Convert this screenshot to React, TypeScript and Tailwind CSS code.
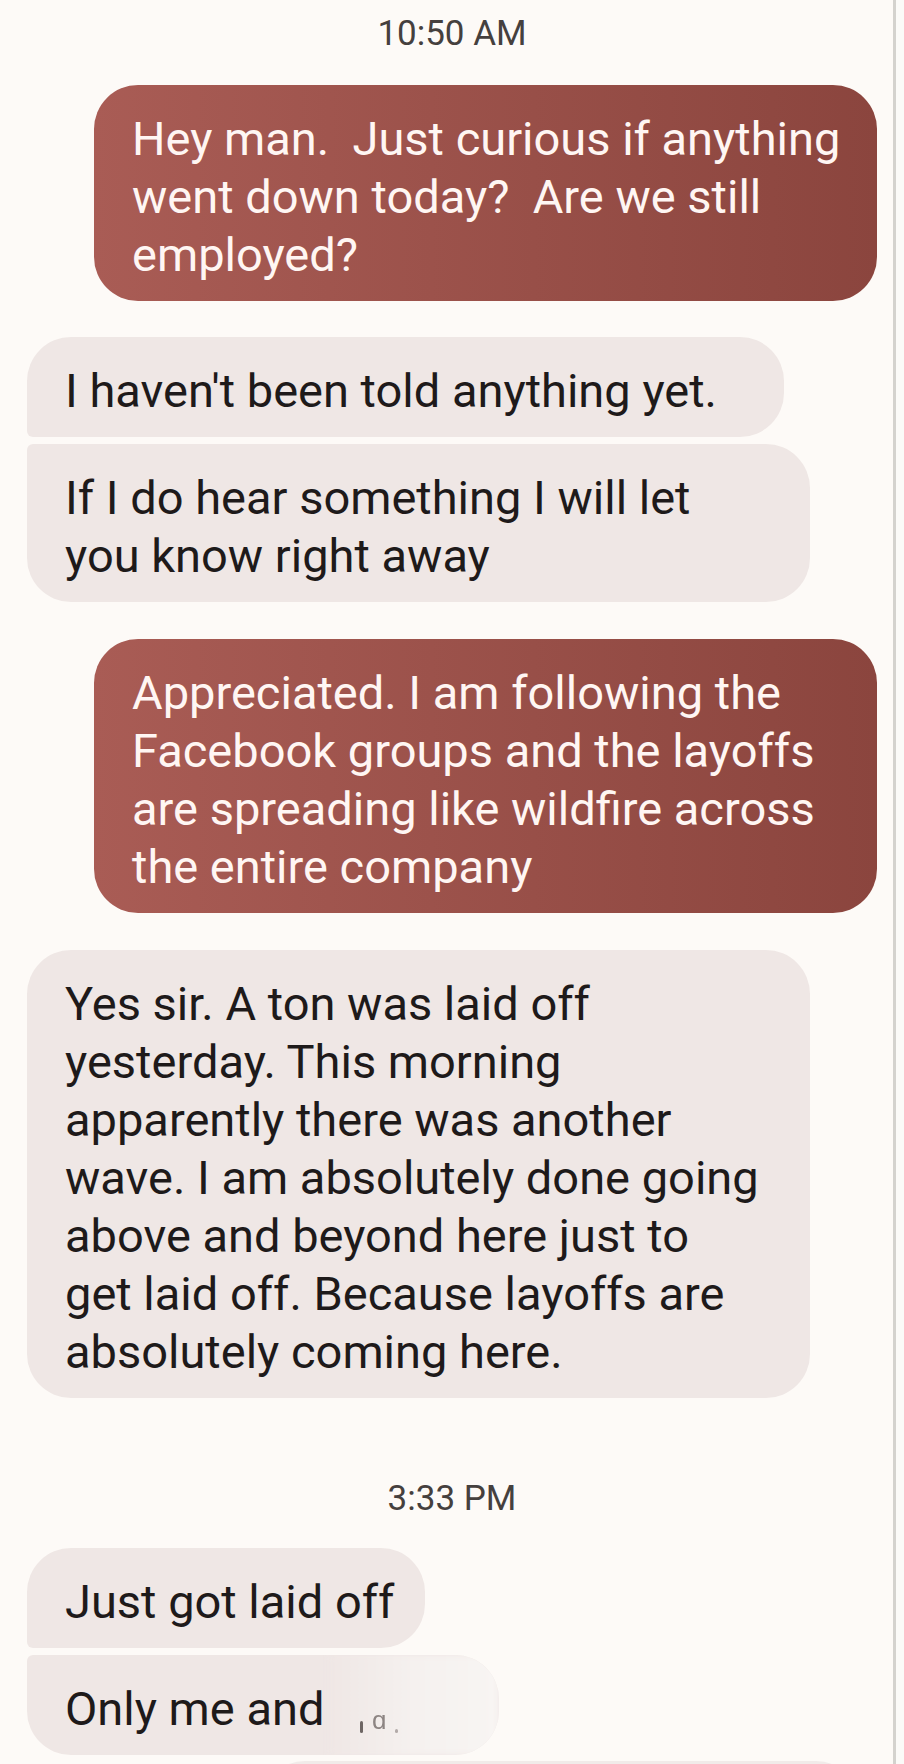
import React from "react";

type Msg = {
  lines: string[];
  width: string;
  corners: string;
};

const sent: Record<string, Msg> = {
  first: {
    lines: [
      "Hey man.  Just curious if anything",
      "went down today?  Are we still",
      "employed?",
    ],
    width: "w-[783px]",
    corners: "rounded-[44px]",
  },
  second: {
    lines: [
      "Appreciated. I am following the",
      "Facebook groups and the layoffs",
      "are spreading like wildfire across",
      "the entire company",
    ],
    width: "w-[783px]",
    corners: "rounded-[44px]",
  },
};

function Stamp({ time, className }: { time: string; className?: string }) {
  return (
    <div
      className={
        "shrink-0 text-center text-[35px] leading-[40px] text-[#45403e] " +
        (className ?? "")
      }
    >
      {time}
    </div>
  );
}

function Sent({ msg, className }: { msg: Msg; className?: string }) {
  return (
    <div
      className={
        "shrink-0 self-end px-[38px] pt-[25px] pb-[17px] text-[47px] leading-[58px] text-[#fff6f3] whitespace-pre bg-gradient-to-r from-[#a95c55] to-[#8b453e] " +
        msg.width +
        " " +
        msg.corners +
        " " +
        (className ?? "")
      }
    >
      {msg.lines.map((l, i) => (
        <div key={i}>{l}</div>
      ))}
    </div>
  );
}

function Received({
  lines,
  width,
  corners,
  className,
  children,
}: {
  lines: string[];
  width: string;
  corners: string;
  className?: string;
  children?: React.ReactNode;
}) {
  return (
    <div
      className={
        "relative shrink-0 self-start overflow-hidden bg-[#efe7e5] px-[38px] pt-[25px] pb-[17px] text-[47px] leading-[58px] text-[#1e1a1a] whitespace-pre " +
        width +
        " " +
        corners +
        " " +
        (className ?? "")
      }
    >
      {lines.map((l, i) => (
        <div key={i}>{l}</div>
      ))}
      {children}
    </div>
  );
}

export default function App() {
  return (
    <div className="flex h-[1764px] w-[904px] overflow-hidden bg-[#fbfaf8] font-[family-name:Roboto,sans-serif]">
      <div className="flex w-[893px] shrink-0 flex-col bg-[#fdfaf7] pl-[27px] pr-[16px] pt-[14px]">
        <Stamp time="10:50 AM" />

        <Sent msg={sent.first} className="mt-[31px]" />

        <Received
          className="mt-[36px]"
          width="w-[757px]"
          corners="rounded-[44px] rounded-bl-[6px]"
          lines={["I haven't been told anything yet."]}
        />
        <Received
          className="mt-[7px]"
          width="w-[783px]"
          corners="rounded-[44px] rounded-tl-[6px]"
          lines={["If I do hear something I will let", "you know right away"]}
        />

        <Sent msg={sent.second} className="mt-[37px]" />

        <Received
          className="mt-[37px]"
          width="w-[783px]"
          corners="rounded-[44px]"
          lines={[
            "Yes sir. A ton was laid off",
            "yesterday. This morning",
            "apparently there was another",
            "wave. I am absolutely done going",
            "above and beyond here just to",
            "get laid off. Because layoffs are",
            "absolutely coming here.",
          ]}
        />

        <Stamp time="3:33 PM" className="mt-[81px]" />

        <Received
          className="mt-[29px]"
          width="w-[398px]"
          corners="rounded-[44px] rounded-bl-[6px]"
          lines={["Just got laid off"]}
        />
        <Received
          className="mt-[7px]"
          width="w-[472px]"
          corners="rounded-[44px] rounded-tl-[6px]"
          lines={["Only me and"]}
        >
          {/* redacted name */}
          <div className="absolute inset-y-0 right-0 w-[170px] bg-gradient-to-r from-[#efe7e5] via-[#f5f1ef] to-[#f8f5f3] blur-[3px]" />
          <div className="absolute left-[333px] top-[52px] flex items-end gap-[9px] text-[#8d8583] blur-[0.6px]">
            <span className="h-[12px] w-[3px] rounded-full bg-[#6e6664]" />
            <span className="text-[26px] leading-[26px]">ɑ</span>
            <span className="h-[4px] w-[3px] rounded-full bg-[#b3aba9]" />
          </div>
        </Received>

        <div className="ml-[234px] mt-[6px] h-[60px] w-[599px] shrink-0 rounded-t-[44px] bg-[#f1ebe9]" />
      </div>
      <div className="w-[3px] shrink-0 bg-[#d4d2ce]" />
      <div className="flex-1 bg-[#fbfaf8]" />
    </div>
  );
}
